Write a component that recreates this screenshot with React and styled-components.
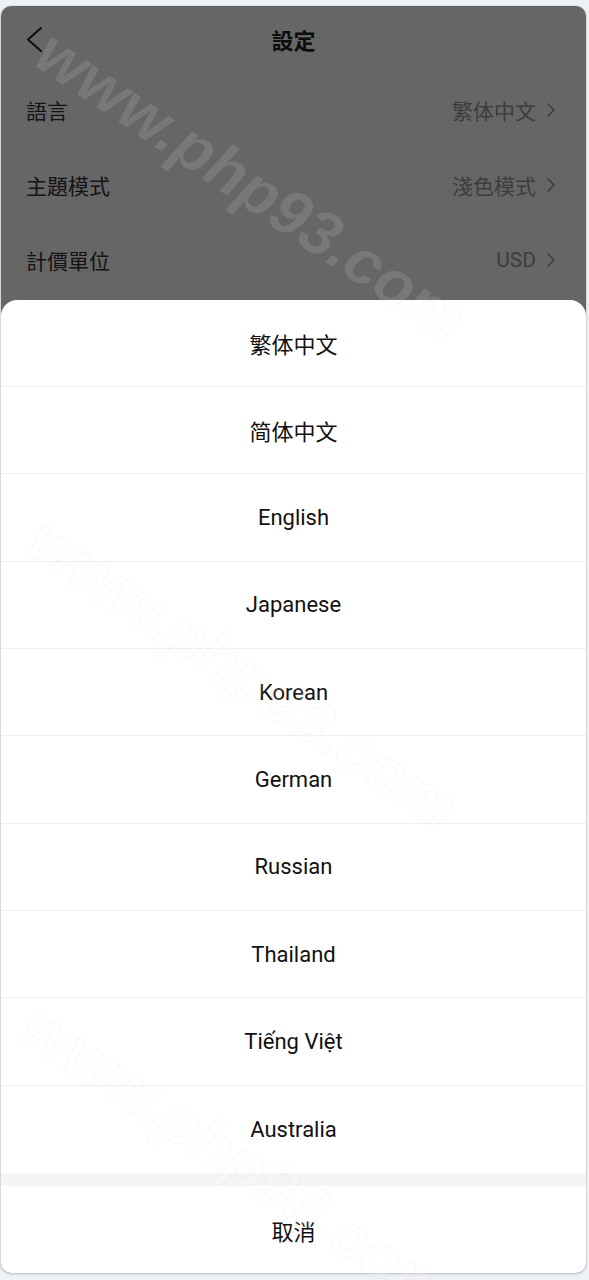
import React from 'react'
import styled, { createGlobalStyle } from 'styled-components'

const GlobalStyle = createGlobalStyle`
    html, body {
        margin: 0;
        padding: 0;
        background: #eef1f6;
    }
    body {
        font-family: Roboto, "Noto Sans CJK SC", "Noto Sans CJK TC", sans-serif;
    }
`;

const Screen = styled.div`
    position: relative;
    width: 589px;
    height: 1280px;
    padding: 6px 3px 7px 1px;
    box-sizing: border-box;
    overflow: hidden;
`;

const Phone = styled.div`
    position: relative;
    height: 100%;
    background: #fff;
    border-radius: 10px;
    overflow: hidden;
    box-shadow: 0 1px 3px rgba(0, 0, 0, 0.18), 0 0 0 1px rgba(0, 0, 0, 0.04);
`;

const Header = styled.div`
    height: 66px;
    display: grid;
    grid-template-columns: 80px 1fr 80px;
    align-items: center;
`;

const BackButton = styled.div`
    display: flex;
    align-items: center;
    padding-left: 26px;
    height: 100%;
`;

const Title = styled.h1`
    margin: 0;
    text-align: center;
    font-size: 22px;
    font-weight: 700;
    color: #222;
`;

const SettingRow = styled.div`
    height: 75px;
    display: flex;
    align-items: center;
    justify-content: space-between;
    padding: 0 31px 0 25px;
`;

const Label = styled.span`
    font-size: 21px;
    color: #333;
`;

const Value = styled.span`
    display: flex;
    align-items: center;
    gap: 11px;
    font-size: 21px;
    color: #999;
`;

const Mask = styled.div`
    position: absolute;
    inset: 0;
    background: rgba(0, 0, 0, 0.6);
`;

const Sheet = styled.div`
    position: absolute;
    left: 0;
    right: 0;
    bottom: 0;
    background: #fff;
    border-radius: 16px 16px 0 0;
    overflow: hidden;
    display: flex;
    flex-direction: column;
`;

const Option = styled.div`
    height: 87.33px;
    box-sizing: border-box;
    display: flex;
    align-items: center;
    justify-content: center;
    font-size: 22px;
    color: #111;
    border-bottom: ${p => (p.$last ? 'none' : '1px solid #efefef')};
`;

const Gap = styled.div`
    height: 13px;
    background: #f5f5f5;
`;

const Cancel = styled(Option)`
    height: 87px;
    border-bottom: none;
`;

const Watermark = styled.span`
    position: absolute;
    left: ${p => p.$x}px;
    top: ${p => p.$y}px;
    transform: translate(-50%, -50%) rotate(34deg) skewX(-8deg);
    font-family: "Liberation Sans", Arial, sans-serif;
    font-weight: 700;
    font-size: 64px;
    white-space: nowrap;
    color: rgba(255, 255, 255, 0.12);
    -webkit-text-stroke: 0.6px rgba(0, 0, 0, 0.05);
    pointer-events: none;
`;

const Chevron = ({ dir = 'right', w = 8, h = 14, color, sw = 1.6 }) => (
    <svg width={w} height={h} viewBox={`0 0 ${w} ${h}`} fill="none">
        <polyline
            points={dir === 'right'
                ? `1,1 ${w - 1},${h / 2} 1,${h - 1}`
                : `${w - 1},1 1,${h / 2} ${w - 1},${h - 1}`}
            stroke={color}
            strokeWidth={sw}
            strokeLinecap="round"
            strokeLinejoin="round"
        />
    </svg>
);

const settings = [
    { label: '語言', value: '繁体中文' },
    { label: '主題模式', value: '淺色模式' },
    { label: '計價單位', value: 'USD' },
];

const languages = [
    '繁体中文',
    '简体中文',
    'English',
    'Japanese',
    'Korean',
    'German',
    'Russian',
    'Thailand',
    'Tiếng Việt',
    'Australia',
];

const App = () => {
    return (
        <>
            <GlobalStyle />
            <Screen>
                <Phone>
                    <Header>
                        <BackButton>
                            <Chevron dir="left" w={15} h={25} color="#222" sw={2} />
                        </BackButton>
                        <Title>設定</Title>
                        <div />
                    </Header>
                    {settings.map(s => (
                        <SettingRow key={s.label}>
                            <Label>{s.label}</Label>
                            <Value>
                                {s.value}
                                <Chevron color="#999" />
                            </Value>
                        </SettingRow>
                    ))}
                    <Mask />
                    <Sheet>
                        {languages.map((l, i) => (
                            <Option key={l} $last={i === languages.length - 1}>{l}</Option>
                        ))}
                        <Gap />
                        <Cancel>取消</Cancel>
                    </Sheet>
                </Phone>
                <Watermark $x={252} $y={186}>www.php93.com</Watermark>
                <Watermark $x={244} $y={674}>www.php93.com</Watermark>
                <Watermark $x={238} $y={1160}>www.php93.com</Watermark>
            </Screen>
        </>
    )
}

export default App
